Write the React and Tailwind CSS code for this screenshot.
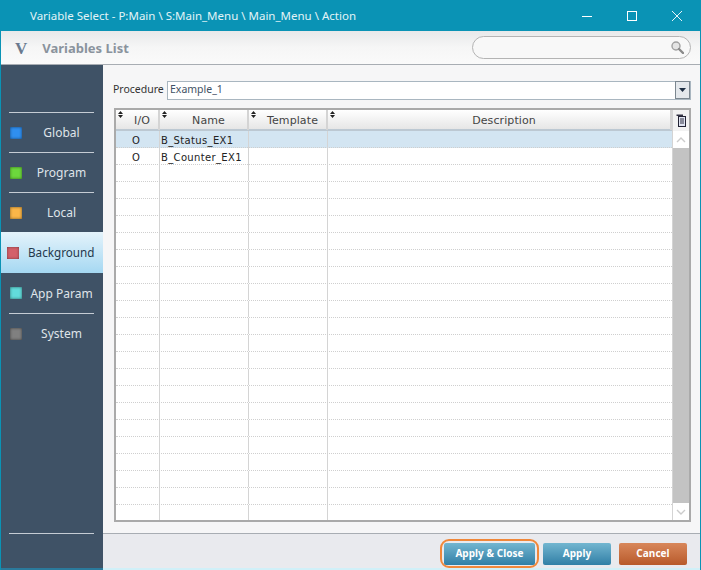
import React from "react";

const font = "font-['Noto_Sans',sans-serif]";
const mono = "font-['DejaVu_Sans',sans-serif]";

const menu = [
  { label: "Global", dot: "bg-[#2f8ff0]", line: true },
  { label: "Program", dot: "bg-[#6cd83c]", line: true },
  { label: "Local", dot: "bg-[#fbb648]", line: true },
  { label: "Background", dot: "bg-[#d4606a]", active: true },
  { label: "App Param", dot: "bg-[#62dcdc]" },
  { label: "System", dot: "bg-[#808080]", line: true },
];

const rows = [
  { io: "O", name: "B_Status_EX1", selected: true },
  { io: "O", name: "B_Counter_EX1" },
  ...Array.from({ length: 21 }, () => ({ io: "", name: "" })),
];

function SortArrows() {
  return (
    <svg width="5" height="7" viewBox="0 0 5 7" className="absolute left-[2px] top-[1px]">
      <path d="M2.5 0 L5 3 H0 Z M2.5 7 L0 4 H5 Z" fill="#222" />
    </svg>
  );
}

function HeadCell({ children }) {
  return (
    <div className="relative flex items-center justify-center border-r-2 border-[#d4d4d4] pt-[3px] text-[11px] tracking-[0.1px] text-[#444]">
      <SortArrows />
      <span className="pl-[10px]">{children}</span>
    </div>
  );
}

function MenuItem({ item }) {
  if (item.active) {
    return (
      <div className="flex h-[41px] items-center bg-gradient-to-b from-[#e4f3fb] to-[#a5d8f2] pl-[6px] pr-2">
        <span className={`h-3 w-3 shrink-0 shadow-[inset_0_0_3px_rgba(0,0,0,0.45)] ${item.dot}`} />
        <span className="ml-[9px] text-[11.7px] text-[#24384c]">{item.label}</span>
      </div>
    );
  }
  return (
    <div className={`ml-2 mr-[9px] flex h-10 items-center ${item.line ? "border-t border-[#c5ccd4]" : ""}`}>
      <span className={`ml-[1px] h-3 w-3 shrink-0 shadow-[inset_0_0_3px_rgba(0,0,0,0.55)] ${item.dot}`} />
      <span className="flex-1 pl-[7px] pt-[1px] text-center text-[12px] text-[#dfe4e9]">{item.label}</span>
    </div>
  );
}

export default function App() {
  return (
    <div className={`flex h-[570px] w-[701px] flex-col overflow-hidden bg-[#0a93b5] px-px ${font}`}>
      {/* title bar */}
      <div className="flex h-[31px] shrink-0 items-center pl-[29px] text-white">
        <span className="text-[11.5px] text-[#e2f3f7]">Variable Select - P:Main \ S:Main_Menu \ Main_Menu \ Action</span>
        <div className="ml-auto flex items-center gap-[35px] pr-[18px]">
          <svg width="10" height="10" viewBox="0 0 10 10">
            <path d="M0 5.5 H10" stroke="#fff" />
          </svg>
          <svg width="10" height="10" viewBox="0 0 10 10">
            <rect x="0.5" y="0.5" width="9" height="9" fill="none" stroke="#fff" />
          </svg>
          <svg width="10" height="10" viewBox="0 0 10 10">
            <path d="M0 0 L10 10 M10 0 L0 10" stroke="#fff" strokeWidth="0.9" />
          </svg>
        </div>
      </div>

      {/* header */}
      <div className="flex h-[34px] shrink-0 items-center border-b border-[#a8adb3] bg-gradient-to-b from-[#e8e9ea] via-[#f6f6f6] to-[#fafafa] pl-[14px] pr-[9px]">
        <span className="pt-[3px] font-['Liberation_Serif',serif] text-[17px] font-bold text-[#6a7a8e]">V</span>
        <span className="ml-[15px] pt-[3px] text-[13px] font-bold text-[#8a939d]">Variables List</span>
        <div className="ml-auto flex h-[23px] w-[219px] items-center justify-end rounded-full border border-[#b4b4b4] bg-[#f8f8f8] pr-[6px]">
          <svg width="13" height="13" viewBox="0 0 13 13">
            <circle cx="5" cy="5" r="4" fill="#e4e4e4" stroke="#a0a0a0" strokeWidth="1.4" />
            <path d="M8 8 L12 12" stroke="#8a8a8a" strokeWidth="2.4" strokeLinecap="round" />
          </svg>
        </div>
      </div>

      {/* body */}
      <div className="flex min-h-0 flex-1">
        <div className="flex w-[102px] shrink-0 flex-col border-b-2 border-[#2a7a9c] bg-[#3f5266] pt-[47px]">
          {menu.map((m) => (
            <MenuItem key={m.label} item={m} />
          ))}
          <div className="mb-[34px] ml-2 mr-[9px] mt-auto border-t border-[#c5ccd4]" />
        </div>

        <div className="flex min-w-0 flex-1 flex-col bg-[#f6f6f7]">
          <div className="flex min-h-0 flex-1 flex-col pl-[10px] pr-[9px] pt-[15px]">
            <div className="flex h-[20px] shrink-0 items-center">
              <span className="w-[49px] shrink-0 whitespace-nowrap text-[10.5px] text-[#333]">Procedure</span>
              <div className="ml-[5px] flex h-[19px] flex-1 items-center justify-between border border-[#a9b6c0] bg-white pl-[2px]">
                <span className="text-[10.5px] text-[#3f5266]">Example_1</span>
                <div className="flex h-[18px] w-[15px] items-center justify-center border border-[#7c8790] bg-[#e4e8ec]">
                  <svg width="7" height="4" viewBox="0 0 7 4">
                    <path d="M0 0 H7 L3.5 4 Z" fill="#1f2f44" />
                  </svg>
                </div>
              </div>
            </div>

            <div className={`ml-px mt-[8px] flex h-[414px] shrink-0 flex-col overflow-hidden border-2 border-[#aaaaaa] bg-white ${mono}`}>
              <div className="flex min-h-0 flex-1">
                <div className="min-w-0 flex-1">
                  <div className="grid h-[21px] grid-cols-[44px_89px_79px_1fr] border-b-2 border-[#bcc8d2] bg-gradient-to-b from-[#ffffff] to-[#e6e6e6]">
                    <HeadCell>I/O</HeadCell>
                    <HeadCell>Name</HeadCell>
                    <HeadCell>Template</HeadCell>
                    <HeadCell>Description</HeadCell>
                  </div>
                  {rows.map((r, i) => (
                    <div
                      key={i}
                      className={`grid h-[17px] grid-cols-[44px_89px_79px_1fr] border-b border-dotted border-[#cfcfcf] text-[10px] tracking-[0.35px] text-[#222] ${r.selected ? "bg-[#d3e5f2]" : ""}`}
                    >
                      <div className="flex items-center justify-center border-r border-[#d4d4d4] pr-[3px] pt-[2px]">{r.io}</div>
                      <div className="flex items-center border-r border-[#d4d4d4] pl-[1px] pt-[2px]">{r.name}</div>
                      <div className="border-r border-[#d4d4d4]" />
                      <div />
                    </div>
                  ))}
                </div>
                <div className="flex w-[17px] shrink-0 flex-col border-l border-[#d4d4d4]">
                  <div className="flex h-[21px] items-center justify-center bg-[#f2f2f2]">
                    <svg width="10" height="13" viewBox="0 0 10 13">
                      <path d="M0.5 0.5 H7 V2 H0.5 Z" fill="#334" />
                      <rect x="2.5" y="2.5" width="7" height="10" fill="#dfe3f0" stroke="#223" />
                      <path d="M4 5 H8 M4 7 H8 M4 9 H8" stroke="#334" />
                    </svg>
                  </div>
                  <div className="flex h-[17px] items-center justify-center">
                    <svg width="10" height="6" viewBox="0 0 10 6">
                      <path d="M1 5 L5 1 L9 5" fill="none" stroke="#ccc" strokeWidth="1.4" />
                    </svg>
                  </div>
                  <div className="flex-1 bg-[#c3c3c3]" />
                  <div className="flex h-[17px] items-center justify-center">
                    <svg width="10" height="6" viewBox="0 0 10 6">
                      <path d="M1 1 L5 5 L9 1" fill="none" stroke="#ccc" strokeWidth="1.4" />
                    </svg>
                  </div>
                </div>
              </div>
            </div>
          </div>

          {/* footer */}
          <div className="flex h-[37px] shrink-0 items-center justify-end border-b-2 border-t border-b-[#d0f0f8] border-t-[#a8adb3] bg-[#e9eaee] pr-[13px] pt-[5px] text-[10px] font-bold tracking-[0.05px] text-white">
            <div className="rounded-[9px] border-2 border-[#f0883a] px-[2px] py-[1.5px]">
              <button className="h-[22px] w-[91px] rounded-[2px] bg-gradient-to-b from-[#72b6d0] to-[#2f7fa6]">Apply &amp; Close</button>
            </div>
            <button className="ml-[4px] h-[22px] w-[68px] rounded-[2px] bg-gradient-to-b from-[#72b6d0] to-[#2f7fa6]">Apply</button>
            <button className="ml-[8px] h-[22px] w-[68px] rounded-[2px] bg-gradient-to-b from-[#d8875a] to-[#b85a2a]">Cancel</button>
          </div>
        </div>
      </div>
    </div>
  );
}
